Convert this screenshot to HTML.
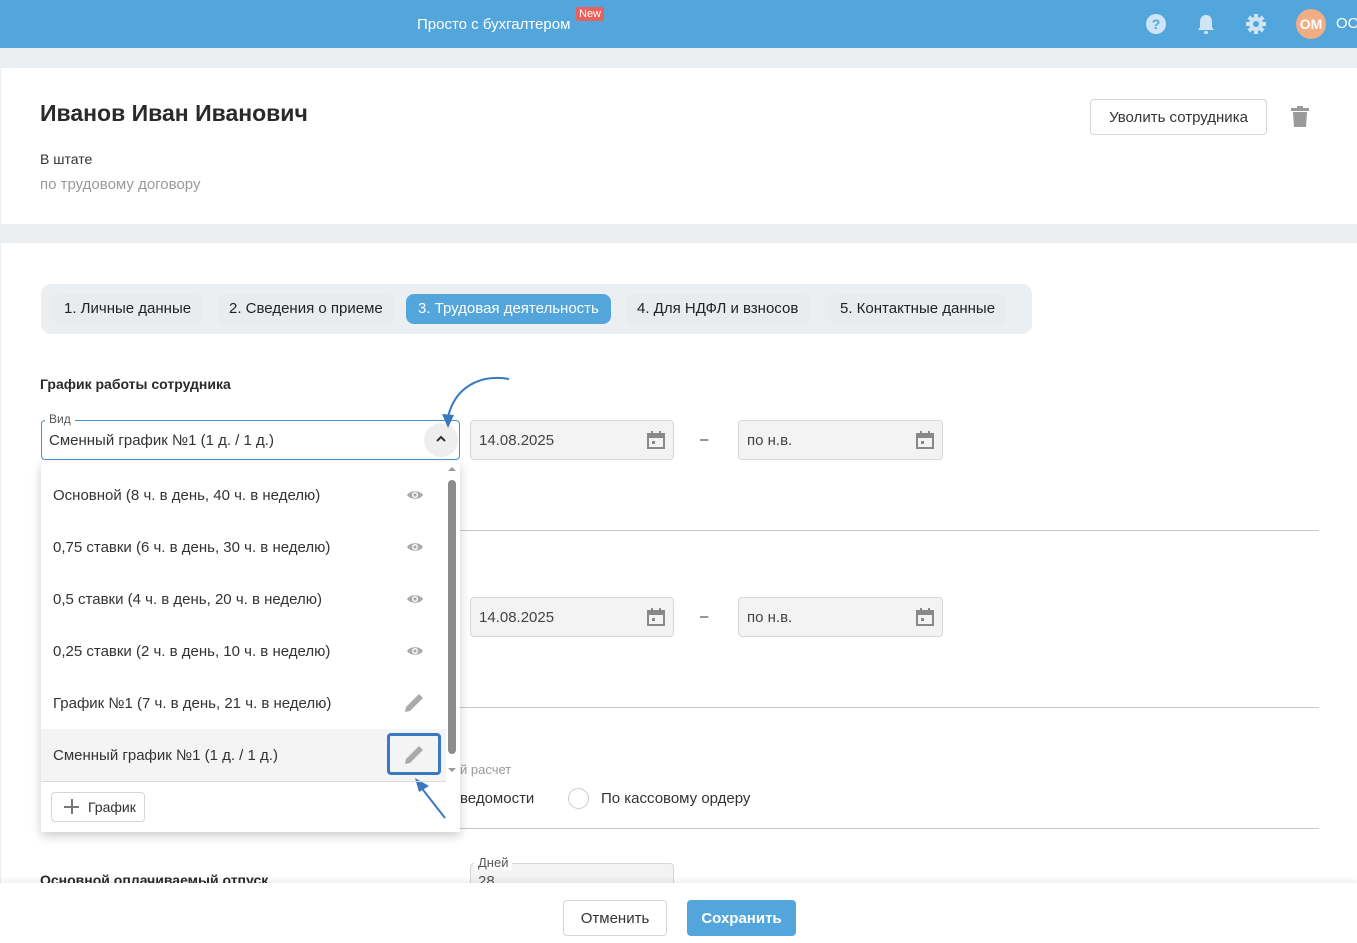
<!DOCTYPE html>
<html><head><meta charset="utf-8"><style>
*{box-sizing:border-box;margin:0;padding:0}
body{width:1357px;height:943px;overflow:hidden;background:#eceff1;font-family:"Liberation Sans",sans-serif;color:#222;position:relative;font-size:15px}
.a{position:absolute}
.hdr{left:0;top:0;width:1357px;height:48px;background:#52a6dc}
.card{background:#fff;left:1px;width:1356px}
.tabs{left:41px;top:284px;width:991px;height:50px;background:#eceff1;border-radius:10px}
.tab{top:294px;height:30px;line-height:30px;border-radius:8px;background:#e9ecef;padding:0 12px;font-size:15px;color:#222}
.inp{height:40px;border:1px solid #d8d8d8;border-radius:4px;background:#f3f3f3;line-height:40px;padding-left:8px;color:#444;font-size:15px}
.cal{position:absolute;right:8px;top:10px;width:18px;height:18px}
.hr{height:1px;background:#c8c8c8;left:460px;width:859px}
.item{left:41px;width:405px;height:52px;line-height:54px;padding-left:12px;font-size:15px;color:#333}
</style></head><body>
<div class="a hdr"></div>
<div class="a" style="left:417px;top:16px;color:#fff;font-size:15px">Просто с бухгалтером</div>
<div class="a" style="left:576px;top:7px;background:#e8615e;color:#fff;font-size:11px;padding:1px 3px;border-radius:2px">New</div>
<svg class="a" style="left:1146px;top:14px" width="20" height="20" viewBox="0 0 20 20"><circle cx="10" cy="10" r="10" fill="#cfe5f6"/><text x="10" y="15" font-size="14" font-weight="bold" text-anchor="middle" fill="#52a6dc" font-family="Liberation Sans">?</text></svg>
<svg class="a" style="left:1197px;top:13px" width="18" height="22" viewBox="0 0 18 22"><path d="M9 2c-4 0-6 3-6 7v5l-2 3h16l-2-3V9c0-4-2-7-6-7z" fill="#cfe5f6"/><rect x="7" y="18" width="4" height="3" rx="1.5" fill="#cfe5f6"/></svg>
<svg class="a" style="left:1246px;top:14px" width="20" height="20" viewBox="0 0 20 20"><g fill="#cfe5f6"><circle cx="10" cy="10" r="7"/><rect x="8" y="0" width="4" height="20"/><rect x="0" y="8" width="20" height="4"/><rect x="8" y="0" width="4" height="20" transform="rotate(45 10 10)"/><rect x="8" y="0" width="4" height="20" transform="rotate(-45 10 10)"/></g><circle cx="10" cy="10" r="3" fill="#52a6dc"/></svg>
<div class="a" style="left:1296px;top:9px;width:30px;height:30px;border-radius:50%;background:#f2ac86;color:#fff;font-weight:bold;font-size:14px;text-align:center;line-height:30px">ОМ</div>
<div class="a" style="left:1336px;top:15px;color:#fff;font-size:15px">ОО</div>

<div class="a card" style="top:68px;height:156px"></div>
<div class="a" style="left:40px;top:100px;font-size:23px;font-weight:bold;color:#2a2a2a">Иванов Иван Иванович</div>
<div class="a" style="left:40px;top:151px;font-size:14px;color:#333">В штате</div>
<div class="a" style="left:40px;top:176px;font-size:15px;color:#9a9a9a">по трудовому договору</div>
<div class="a" style="left:1090px;top:99px;width:177px;height:36px;border:1px solid #d6d6d6;border-radius:4px;text-align:center;line-height:35px;font-size:15px;color:#333">Уволить сотрудника</div>
<svg class="a" style="left:1291px;top:106px" width="18" height="21" viewBox="0 0 18 21"><rect x="0" y="2" width="18" height="3" fill="#9a9a9a"/><rect x="6" y="0" width="6" height="3" fill="#9a9a9a"/><path d="M2 6h14l-1 15H3z" fill="#9a9a9a"/></svg>

<div class="a card" style="top:243px;height:700px"></div>
<div class="a tabs"></div>
<div class="a tab" style="left:52px">1. Личные данные</div>
<div class="a tab" style="left:217px">2. Сведения о приеме</div>
<div class="a tab" style="left:406px;background:#52a6dc;color:#fff">3. Трудовая деятельность</div>
<div class="a tab" style="left:625px">4. Для НДФЛ и взносов</div>
<div class="a tab" style="left:828px">5. Контактные данные</div>

<div class="a" style="left:40px;top:376px;font-size:14px;font-weight:bold;color:#2a2a2a">График работы сотрудника</div>
<div class="a" style="left:41px;top:420px;width:419px;height:40px;border:1px solid #4a90d0;border-radius:4px"></div>
<div class="a" style="left:45px;top:412px;background:#fff;padding:0 4px;font-size:12px;color:#555">Вид</div>
<div class="a" style="left:49px;top:432px;font-size:15px;color:#333">Сменный график №1 (1 д. / 1 д.)</div>
<div class="a" style="left:424px;top:423px;width:34px;height:34px;border-radius:50%;background:#eee"></div>
<svg class="a" style="left:436px;top:435px" width="10" height="8" viewBox="0 0 10 8"><path d="M1 6l4-4 4 4" stroke="#333" stroke-width="2" fill="none"/></svg>
<svg class="a" style="left:440px;top:372px" width="72" height="60" viewBox="0 0 72 60"><path d="M69 7C40 2 15 15 8 45" stroke="#3a78c0" stroke-width="2" fill="none"/><path d="M2 42l6 14 6-13z" fill="#3a78c0"/></svg>

<div class="a inp" style="left:470px;top:420px;width:204px">14.08.2025<svg class="cal" viewBox="0 0 18 18"><rect x="1" y="3" width="16" height="14" fill="none" stroke="#888" stroke-width="2"/><rect x="1" y="3" width="16" height="4" fill="#888"/><rect x="4" y="0" width="2" height="4" fill="#888"/><rect x="12" y="0" width="2" height="4" fill="#888"/><rect x="5" y="10" width="3" height="3" fill="#888"/></svg></div>
<div class="a" style="left:700px;top:431px;color:#333">–</div>
<div class="a inp" style="left:738px;top:420px;width:205px">по н.в.<svg class="cal" viewBox="0 0 18 18"><rect x="1" y="3" width="16" height="14" fill="none" stroke="#888" stroke-width="2"/><rect x="1" y="3" width="16" height="4" fill="#888"/><rect x="4" y="0" width="2" height="4" fill="#888"/><rect x="12" y="0" width="2" height="4" fill="#888"/><rect x="5" y="10" width="3" height="3" fill="#888"/></svg></div>
<div class="a hr" style="top:530px"></div>
<div class="a inp" style="left:470px;top:597px;width:204px">14.08.2025<svg class="cal" viewBox="0 0 18 18"><rect x="1" y="3" width="16" height="14" fill="none" stroke="#888" stroke-width="2"/><rect x="1" y="3" width="16" height="4" fill="#888"/><rect x="4" y="0" width="2" height="4" fill="#888"/><rect x="12" y="0" width="2" height="4" fill="#888"/><rect x="5" y="10" width="3" height="3" fill="#888"/></svg></div>
<div class="a" style="left:700px;top:608px;color:#333">–</div>
<div class="a inp" style="left:738px;top:597px;width:205px">по н.в.<svg class="cal" viewBox="0 0 18 18"><rect x="1" y="3" width="16" height="14" fill="none" stroke="#888" stroke-width="2"/><rect x="1" y="3" width="16" height="4" fill="#888"/><rect x="4" y="0" width="2" height="4" fill="#888"/><rect x="12" y="0" width="2" height="4" fill="#888"/><rect x="5" y="10" width="3" height="3" fill="#888"/></svg></div>
<div class="a hr" style="top:707px"></div>
<div class="a" style="left:460px;top:762px;font-size:13px;color:#999">й расчет</div>
<div class="a" style="left:460px;top:790px;font-size:15px;color:#333">ведомости</div>
<div class="a" style="left:568px;top:788px;width:21px;height:21px;border:1px solid #ccc;border-radius:50%"></div>
<div class="a" style="left:601px;top:790px;font-size:15px;color:#333">По кассовому ордеру</div>
<div class="a hr" style="top:828px"></div>
<div class="a" style="left:470px;top:863px;width:204px;height:30px;border:1px solid #d8d8d8;border-radius:4px;background:#f3f3f3"></div>
<div class="a" style="left:474px;top:855px;background:#fff;padding:0 4px;font-size:13px;color:#555">Дней</div>
<div class="a" style="left:478px;top:873px;font-size:15px;color:#555">28</div>
<div class="a" style="left:40px;top:872px;font-size:14px;font-weight:bold;color:#2a2a2a">Основной оплачиваемый отпуск</div>

<div class="a" style="left:41px;top:462px;width:419px;height:370px;background:#fff;box-shadow:0 4px 10px rgba(0,0,0,.2)"></div>
<div class="a item" style="top:469px">Основной (8 ч. в день, 40 ч. в неделю)</div>
<div class="a item" style="top:521px">0,75 ставки (6 ч. в день, 30 ч. в неделю)</div>
<div class="a item" style="top:573px">0,5 ставки (4 ч. в день, 20 ч. в неделю)</div>
<div class="a item" style="top:625px">0,25 ставки (2 ч. в день, 10 ч. в неделю)</div>
<div class="a item" style="top:677px">График №1 (7 ч. в день, 21 ч. в неделю)</div>
<div class="a item" style="top:729px;background:#f4f4f4">Сменный график №1 (1 д. / 1 д.)</div>
<svg class="a" style="left:406px;top:489px" width="18" height="12" viewBox="0 0 18 12"><path d="M1 6C4 1 14 1 17 6C14 11 4 11 1 6z" fill="#aaa"/><circle cx="9" cy="6" r="3" fill="#fff"/><circle cx="9" cy="6" r="1.6" fill="#aaa"/></svg>
<svg class="a" style="left:406px;top:541px" width="18" height="12" viewBox="0 0 18 12"><path d="M1 6C4 1 14 1 17 6C14 11 4 11 1 6z" fill="#aaa"/><circle cx="9" cy="6" r="3" fill="#fff"/><circle cx="9" cy="6" r="1.6" fill="#aaa"/></svg>
<svg class="a" style="left:406px;top:593px" width="18" height="12" viewBox="0 0 18 12"><path d="M1 6C4 1 14 1 17 6C14 11 4 11 1 6z" fill="#aaa"/><circle cx="9" cy="6" r="3" fill="#fff"/><circle cx="9" cy="6" r="1.6" fill="#aaa"/></svg>
<svg class="a" style="left:406px;top:645px" width="18" height="12" viewBox="0 0 18 12"><path d="M1 6C4 1 14 1 17 6C14 11 4 11 1 6z" fill="#aaa"/><circle cx="9" cy="6" r="3" fill="#fff"/><circle cx="9" cy="6" r="1.6" fill="#aaa"/></svg>
<svg class="a" style="left:404px;top:692px" width="21" height="21" viewBox="0 0 21 21"><path d="M1 20l1-5L15 2l4 4L6 19z" fill="#aaa"/></svg>
<svg class="a" style="left:404px;top:744px" width="21" height="21" viewBox="0 0 21 21"><path d="M1 20l1-5L15 2l4 4L6 19z" fill="#aaa"/></svg>
<div class="a" style="left:387px;top:733px;width:54px;height:42px;border:3px solid #3a78c0;border-radius:4px"></div>
<svg class="a" style="left:412px;top:776px" width="36" height="44" viewBox="0 0 36 44"><path d="M33 42L8 10" stroke="#3a78c0" stroke-width="2"/><path d="M3 2l14 8-10 6z" fill="#3a78c0"/></svg>
<svg class="a" style="left:447px;top:465px" width="10" height="8"><path d="M1 6l4-4 4 4z" fill="#999"/></svg>
<div class="a" style="left:448px;top:480px;width:8px;height:274px;background:#8c8c8c;border-radius:4px"></div>
<svg class="a" style="left:447px;top:766px" width="10" height="8"><path d="M1 2l4 4 4-4z" fill="#999"/></svg>
<div class="a" style="left:41px;top:781px;width:405px;height:1px;background:#ddd"></div>
<div class="a" style="left:51px;top:792px;width:94px;height:30px;border:1px solid #d6d6d6;border-radius:4px;font-size:14px;color:#333;line-height:29px;padding-left:36px">График</div>
<div class="a" style="left:64px;top:806px;width:15px;height:1.5px;background:#777"></div>
<div class="a" style="left:71px;top:799px;width:1.5px;height:15px;background:#777"></div>

<div class="a" style="left:0;top:883px;width:1357px;height:60px;background:#fff;box-shadow:0 -3px 6px rgba(0,0,0,.07)"></div>
<div class="a" style="left:563px;top:900px;width:104px;height:36px;border:1px solid #d6d6d6;border-radius:4px;text-align:center;line-height:35px;font-size:15px;color:#333">Отменить</div>
<div class="a" style="left:687px;top:900px;width:109px;height:36px;background:#52a6dc;border-radius:4px;text-align:center;line-height:37px;font-size:15px;color:#fff;font-weight:bold">Сохранить</div>
</body></html>
